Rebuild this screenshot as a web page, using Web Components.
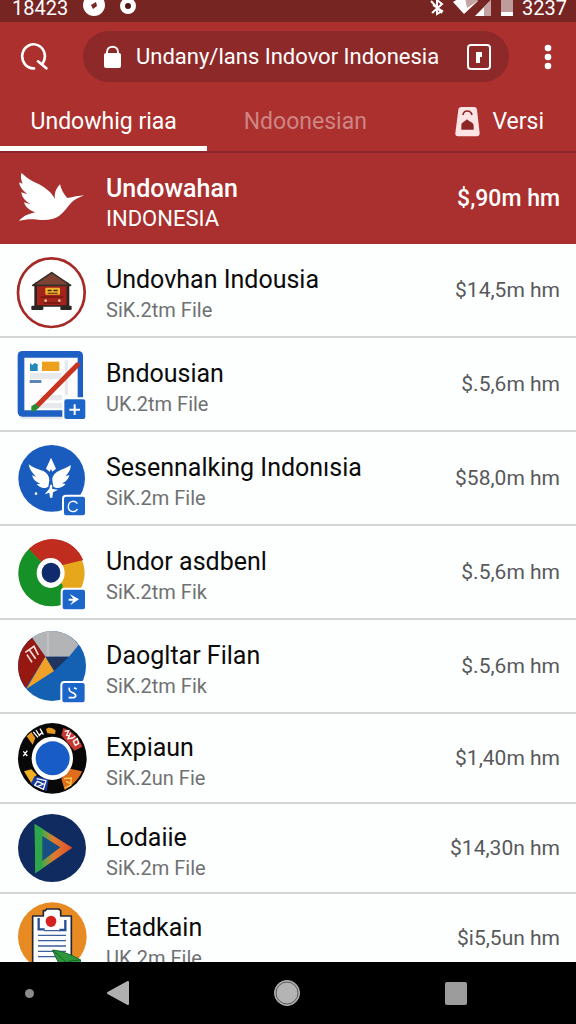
<!DOCTYPE html>
<html lang="id">
<head>
<meta charset="utf-8">
<meta name="viewport" content="width=device-width, initial-scale=1">
<title>Undowahan Indonesia</title>
<style>
  body {
    margin: 0;
    font-family: Roboto, "Liberation Sans", sans-serif;
    background: #fdfefe;
  }
</style>
</head>
<body>
<phone-screen>
  <status-bar slot="top"></status-bar>
  <app-toolbar slot="top"></app-toolbar>
  <tab-strip slot="top"></tab-strip>

  <file-row featured>
    <svg slot="icon" viewBox="48 36 216 216">
      <path fill="#fff" d="M64 66C72 72 84 84 104 94C132 106 156 124 165 145C162 128 168 112 180 100C184 116 190 128 202 141C220 138 236 134 253 133C238 139 226 144 215 154C204 166 192 184 178 194C162 206 138 209 114 206C92 203 74 205 57 210C66 198 80 190 106 184C88 178 76 168 72 154L92 160C76 150 66 140 64 124L82 130C66 116 58 106 58 94L68 98C62 86 62 76 64 66Z"/>
    </svg>
    <span slot="title">Undowahan</span>
    <span slot="detail">INDONESIA</span>
    <span slot="price">$,90m hm</span>
  </file-row>

  <file-row>
    <svg slot="icon" viewBox="48 312 216 216">
      <ellipse cx="154" cy="428" rx="100" ry="103" fill="#fff" stroke="#a52a27" stroke-width="8"/>
      <path fill="#a4231a" stroke="#2c2621" stroke-width="5" d="M108 400H202V468H108Z"/>
      <path fill="#7d4233" stroke="#35302a" stroke-width="5" stroke-linejoin="round" d="M98 406L155 368L212 406Z"/>
      <path stroke="#2c2621" stroke-width="6" d="M106 404V470M205 404V470"/>
      <rect x="136" y="413" width="44" height="21" rx="3" fill="#f3b52d"/>
      <path fill="#4b2a16" d="M143 419H155V424H143ZM160 419H173V424H160ZM143 428H173V431H143Z"/>
      <path stroke="#721811" stroke-width="4" d="M122 441H190M132 459H180"/>
      <circle cx="137" cy="452" r="4" fill="#f2c9a3"/>
      <circle cx="178" cy="452" r="4" fill="#f2c9a3"/>
      <rect x="94" y="467" width="36" height="13" rx="3" fill="#2b2723"/>
      <rect x="181" y="467" width="34" height="13" rx="3" fill="#2b2723"/>
    </svg>
    <span slot="title">Undovhan Indousia</span>
    <span slot="detail">SiK.2tm File</span>
    <span slot="price">$14,5m hm</span>
  </file-row>

  <file-row>
    <svg slot="icon" viewBox="48 39 216 216">
      <rect x="56" y="56" width="190" height="197" rx="14" fill="#e4e8ee"/>
      <rect x="53" y="48" width="196" height="197" rx="14" fill="#1d5fc2"/>
      <path fill="#fdfdfd" d="M73 68H233V226H73Z"/>
      <path fill="#e8e9ec" d="M90 114H184V132H90ZM122 180H186V196H122ZM118 204H190V220H118ZM194 76H204V180H194Z"/>
      <path fill="#2289b8" d="M90 84L97 90L104 84L113 88V108H90Z"/>
      <rect x="126" y="80" width="52" height="28" fill="#eda01e"/>
      <rect x="89" y="135" width="35" height="9" fill="#5b84bd"/>
      <path stroke="#c83420" stroke-width="15" stroke-linecap="round" d="M110 214L232 90"/>
      <path fill="#278c34" d="M94 214L106 206L118 216L106 228L94 230Z"/>
      <rect x="190" y="190" width="69" height="65" rx="9" fill="#1d66c9" stroke="#fff" stroke-width="6"/>
      <path stroke="#fff" stroke-width="6" d="M224 208V240M208 224H240"/>
    </svg>
    <span slot="title">Bndousian</span>
    <span slot="detail">UK.2tm File</span>
    <span slot="price">$.5,6m hm</span>
  </file-row>

  <file-row>
    <svg slot="icon" viewBox="48 321 216 216">
      <circle cx="155" cy="430" r="100" fill="#195cbd"/>
      <g fill="#fff">
        <path d="M86 388C98 398 116 404 130 408C142 414 148 424 148 436L145 455C134 463 120 459 110 448L121 446C108 442 99 434 96 421L108 425C95 412 88 402 86 388Z"/>
        <path d="M212 390C202 398 188 402 176 408C164 414 156 424 157 436L160 455C172 463 186 458 197 447L186 445C198 440 206 432 208 420L196 424C207 413 213 402 212 390Z"/>
        <path d="M153 368L168 401L157 410L153 402L149 410L138 401Z"/>
        <path d="M151 449H156L157 462L174 464L159 472L157 488H150L148 473L134 478L148 461Z"/>
        <circle cx="108" cy="476" r="4"/>
      </g>
      <rect x="189" y="482" width="69" height="62" rx="9" fill="#1d66c9" stroke="#fff" stroke-width="6"/>
      <path fill="none" stroke="#fff" stroke-width="4" d="M232 506C229 500 223 498 217 499C209 501 205 507 205 515C205 523 210 529 218 530C224 530 230 528 232 522"/>
    </svg>
    <span slot="title">Sesennalking Indonısia</span>
    <span slot="detail">SiK.2m File</span>
    <span slot="price">$58,0m hm</span>
  </file-row>

  <file-row>
    <svg slot="icon" viewBox="48 33 216 216">
      <circle cx="155" cy="144" r="99" fill="#e7a71c"/>
      <path fill="#c02c1d" d="M155 144V122L249 105A99 99 0 0 0 87 72Z"/>
      <path fill="#c02c1d" d="M155 144L87 72A99 99 0 0 1 249 105L180 122Z"/>
      <path fill="#159128" d="M155 144L87 72A99 99 0 0 0 185 239L188 180Z"/>
      <ellipse cx="152" cy="144" rx="42" ry="45" fill="#fff"/>
      <ellipse cx="153" cy="143" rx="28" ry="30" fill="#102b6c"/>
      <rect x="185" y="191" width="73" height="65" rx="9" fill="#1d66c9" stroke="#fff" stroke-width="6"/>
      <path fill="#fff" d="M206 221H220L209 207L237 223L210 241L219 227H206Z"/>
    </svg>
    <span slot="title">Undor asdbenl</span>
    <span slot="detail">SiK.2tm Fik</span>
    <span slot="price">$.5,6m hm</span>
  </file-row>

  <file-row>
    <svg slot="icon" viewBox="48 315 216 216">
      <ellipse cx="156" cy="423" rx="102" ry="105" fill="#1460b2"/>
      <path fill="#b3b4b6" d="M96 338A102 105 0 0 1 236 359L207 395H136Z"/>
      <path fill="#1d355f" d="M136 395H207L162 438Z"/>
      <path fill="#971711" d="M96 338L136 395L77 489A102 105 0 0 1 96 338Z"/>
      <path fill="#efa12a" d="M136 395L162 438L79 492Z"/>
      <path stroke="#d0d1d2" stroke-width="3" d="M144 319V394"/>
      <path fill="none" stroke="#f4dfdb" stroke-width="5" d="M76 382L102 364L115 390M81 389L96 412M89 376L107 401"/>
      <rect x="184" y="471" width="73" height="64" rx="9" fill="#1d66c9" stroke="#fff" stroke-width="6"/>
      <path fill="none" stroke="#fff" stroke-width="5" d="M208 488C205 500 214 501 222 505C232 512 226 519 216 518H206M222 488L230 492"/>
    </svg>
    <span slot="title">Daogltar Filan</span>
    <span slot="detail">SiK.2tm Fik</span>
    <span slot="price">$.5,6m hm</span>
  </file-row>

  <file-row compact>
    <svg slot="icon" viewBox="48 36 216 216">
      <ellipse cx="157" cy="145" rx="103" ry="106" fill="#090808"/>
      <path fill="#e8991f" d="M80 79L94 66L106 84L98 104ZM138 58C142 50 160 52 167 62L165 72L142 70Z"/>
      <path fill="#c83832" d="M190 54C216 62 236 84 247 110L223 122L184 76Z"/>
      <path fill="#f0b022" d="M72 184L94 178L110 194L94 220Z"/>
      <path fill="#173a9b" d="M104 198L146 206L140 244L92 222Z"/>
      <path fill="#e06d1c" d="M210 176L246 184C236 208 218 226 194 240L184 206Z"/>
      <path fill="none" stroke="#fff" stroke-width="4" d="M100 66L114 82M108 60L118 76L128 66M120 56L130 74M194 64L206 62L200 76L210 78M212 68L204 86L218 84L226 78M220 94L232 86L236 100L226 106ZM70 124L82 138M82 122L70 138M110 206L138 212L130 238L104 226L112 214L130 222L112 230"/>
      <path fill="none" stroke="#f8cd51" stroke-width="4" d="M192 206L214 204L212 226L194 234M198 214L210 220"/>
      <ellipse cx="157" cy="145" rx="62" ry="65" fill="#fff"/>
      <ellipse cx="158" cy="145" rx="51" ry="51" fill="#185dc7"/>
    </svg>
    <span slot="title">Expiaun</span>
    <span slot="detail">SiK.2un Fie</span>
    <span slot="price">$1,40m hm</span>
  </file-row>

  <file-row compact>
    <svg slot="icon" viewBox="48 306 216 216">
      <defs>
        <linearGradient id="play" x1="0" x2="1" y1="0" y2="0">
          <stop offset="0" stop-color="#2da54c"/>
          <stop offset=".25" stop-color="#55a647"/>
          <stop offset=".5" stop-color="#df7b2e"/>
          <stop offset="1" stop-color="#e24f2b"/>
        </linearGradient>
      </defs>
      <circle cx="156" cy="414" r="102" fill="#102b60"/>
      <path fill="url(#play)" d="M104 342L217 413L106 490Z"/>
      <path fill="#30a64b" d="M104 342L127 356V474L106 490Z"/>
      <path fill="#174f83" d="M127 378L181 412L127 453Z"/>
    </svg>
    <span slot="title">Lodaiie</span>
    <span slot="detail">SiK.2m File</span>
    <span slot="price">$14,30n hm</span>
  </file-row>

  <file-row compact>
    <svg slot="icon" viewBox="48 66 216 216">
      <circle cx="157" cy="170" r="103" fill="#e78a22"/>
      <path fill="#fff" stroke="#20283c" stroke-width="5" stroke-linejoin="round" d="M98 108H130V92H136L140 87H176L182 92V108H214V274H98Z"/>
      <path fill="none" stroke="#284f94" stroke-width="7" d="M116 114V148H134M196 120V150H178"/>
      <path fill="none" stroke="#3b5f9d" stroke-width="4" d="M132 152H182M114 166H198M114 182H198M114 198H198M114 214H198M114 230H170"/>
      <ellipse cx="153" cy="124" rx="16" ry="17" fill="#d3211d"/>
      <path fill="#2d963a" stroke="#17672a" stroke-width="3" d="M158 210C190 214 218 226 242 240L236 272H186C178 248 166 232 158 210Z"/>
      <path stroke="#17672a" stroke-width="3" d="M160 212L216 262M242 240L204 244"/>
    </svg>
    <span slot="title">Etadkain</span>
    <span slot="detail">UK.2m File</span>
    <span slot="price">$i5,5un hm</span>
  </file-row>

  <system-nav slot="bottom"></system-nav>
</phone-screen>

<script>
function attachTemplate(host, html) {
  const template = document.createElement('template');
  template.innerHTML = html;
  host.attachShadow({ mode: 'open' }).appendChild(template.content.cloneNode(true));
}

class PhoneScreen extends HTMLElement {
  constructor() {
    super();
    attachTemplate(this, `
      <style>
        :host {
          display: flex;
          flex-direction: column;
          height: 100vh;
        }

        header {
          flex: none;
          background: #ab302e;
          color: #fff;
        }

        main {
          flex: 1;
          min-height: 0;
          overflow: hidden;
        }
      </style>
      <header><slot name="top"></slot></header>
      <main><slot></slot></main>
      <slot name="bottom"></slot>
    `);
  }
}

class StatusBar extends HTMLElement {
  constructor() {
    super();
    attachTemplate(this, `
      <style>
        :host {
          display: flex;
          justify-content: space-between;
          align-items: flex-end;
          box-sizing: border-box;
          height: 22px;
          padding: 0 9px 2px 12px;
          overflow: hidden;
          background: #762523;
          font-size: 20px;
          line-height: 20px;
        }

        div {
          display: flex;
          align-items: center;
          gap: 12px;
        }

        .right {
          gap: 8px;
        }

        svg {
          display: block;
          height: 24px;
        }
      </style>
      <div>
        <span>18423</span>
        <svg width="60" viewBox="80 -4 60 24" aria-hidden="true">
          <circle cx="94" cy="5" r="11" fill="#fff"/>
          <path fill="#762523" d="M91 5L96 2L97 6L93 9Z"/>
          <circle cx="128" cy="6" r="8" fill="#fff"/>
          <circle cx="128" cy="6" r="3" fill="#4f1919"/>
        </svg>
      </div>
      <div class="right">
        <svg width="84" viewBox="433 -4 84 24" aria-hidden="true">
          <path fill="none" stroke="#fff" stroke-width="2" d="M434 1L445 13M435 13L445 4L440 0V14L445 11L436 5"/>
          <path fill="#fff" d="M456 2C462 -3 476 -3 481 1L467 14Z"/>
          <path fill="#c4a3a2" d="M468 -2L476 -2L481 1L470 8Z"/>
          <path fill="#fff" d="M478 16L494 0V16Z"/>
          <path fill="#c4a3a2" d="M487 7L494 0V16H487Z"/>
          <path fill="#bd9c9b" d="M504 -4H516V12H504Z"/>
          <path fill="#fff" d="M504 12H516V16H504Z"/>
        </svg>
        <span>3237</span>
      </div>
    `);
  }
}

class AppToolbar extends HTMLElement {
  constructor() {
    super();
    attachTemplate(this, `
      <style>
        :host {
          display: flex;
          align-items: center;
          padding: 9px 0 0;
        }

        button {
          display: grid;
          place-items: center;
          padding: 0;
          border: 0;
          background: none;
        }

        svg {
          display: block;
        }

        .search {
          width: 83px;
          height: 48px;
          padding-right: 14px;
        }

        .more {
          width: 67px;
          height: 48px;
          padding-left: 10px;
        }

        /* Address pill */
        label {
          flex: 1;
          min-width: 0;
          height: 51px;
          display: flex;
          align-items: center;
          gap: 14px;
          box-sizing: border-box;
          padding: 0 17px 0 20px;
          border-radius: 26px;
          background: #8e2929;
        }

        input {
          flex: 1;
          min-width: 0;
          padding: 0;
          border: 0;
          outline: 0;
          background: none;
          color: #fff;
          font: 22px/32px Roboto, "Liberation Sans", sans-serif;
        }
      </style>
      <button class="search" aria-label="Search">
        <svg width="30" height="30" viewBox="60 120 90 90">
          <path fill="none" stroke="#fff" stroke-width="8" stroke-linecap="round" d="M102 199A34 36 0 1 1 126 187M114 178L139 199"/>
        </svg>
      </button>
      <label>
        <svg width="19" height="24" viewBox="0 0 19 24" aria-hidden="true">
          <path fill="none" stroke="#fff" stroke-width="2" d="M4 9V7C4 0 15 0 15 7V9"/>
          <rect x="1" y="8" width="17" height="15" rx="2" fill="#fff"/>
        </svg>
        <input type="text" aria-label="Address" value="Undany/lans Indovor Indonesia">
        <svg width="26" height="28" viewBox="0 0 26 28" aria-hidden="true">
          <rect x="2" y="2" width="22" height="24" rx="3" fill="none" stroke="#fff" stroke-width="2"/>
          <path fill="#fff" d="M10 9H16V14H14V20H10Z"/>
        </svg>
      </label>
      <button class="more" aria-label="More">
        <svg width="8" height="26" viewBox="0 0 8 26" fill="#fff">
          <circle cx="4" cy="4" r="3.3"/>
          <circle cx="4" cy="13" r="3.3"/>
          <circle cx="4" cy="22" r="3.3"/>
        </svg>
      </button>
    `);
  }
}

class TabStrip extends HTMLElement {
  constructor() {
    super();
    attachTemplate(this, `
      <style>
        :host {
          display: block;
          padding-top: 16px;
          border-bottom: 2px solid #8b2728;
        }

        div {
          display: grid;
          grid-template-columns: 36fr 34fr 30fr;
        }

        button {
          display: flex;
          align-items: center;
          justify-content: center;
          gap: 12px;
          height: 53px;
          padding: 0;
          border: 0;
          border-bottom: 5px solid transparent;
          background: none;
          color: #fff;
          font: 23px/28px Roboto, "Liberation Sans", sans-serif;
        }

        button[aria-selected="true"] {
          border-color: #fff;
        }

        .dim {
          color: #cf8583;
        }

        .end {
          justify-content: flex-end;
          padding-right: 32px;
        }
      </style>
      <div role="tablist">
        <button role="tab" aria-selected="true">Undowhig riaa</button>
        <button role="tab" aria-selected="false" class="dim">Ndoonesian</button>
        <button role="tab" aria-selected="false" class="end">
          <svg width="25" height="30" viewBox="515 320 75 90" aria-hidden="true">
            <path fill="#fde3e3" d="M534 320H572Q580 320 581 328L589 398Q589 408 580 408H524Q515 408 516 398L525 328Q526 320 534 320Z"/>
            <path fill="#8c2727" d="M534 388V376C534 366 542 366 551 357C560 366 571 366 571 376V388Z"/>
            <path fill="none" stroke="#8c2727" stroke-width="5" d="M539 344C541 328 562 328 566 344"/>
          </svg>
          Versi
        </button>
      </div>
    `);
  }
}

/*
One entry of the list.
Attributes: featured (red banner row), compact (shorter row)
Slots: icon, title, detail, price
*/
class FileRow extends HTMLElement {
  constructor() {
    super();
    attachTemplate(this, `
      <style>
        :host {
          display: block;
          box-sizing: border-box;
          height: 94px;
          border-bottom: 2px solid #d3d4d5;
          color: #0b0b0b;
          --detail: #707172;
          --price: #58595a;
        }

        :host([compact]) {
          height: 90px;
        }

        :host([featured]) {
          height: 91px;
          border: 0;
          background: #a9302e;
          color: #fff;
          --detail: #fff;
          --price: #fff;
          --price-size: 23px;
          --weight: 500;
        }

        a {
          display: flex;
          align-items: center;
          gap: 18px;
          height: 100%;
          padding: 0 16px;
          color: inherit;
          text-decoration: none;
        }

        ::slotted(svg) {
          display: block;
          flex: none;
          width: 72px;
          height: 72px;
          overflow: visible;
        }

        .text {
          flex: 1;
          min-width: 0;
          padding-top: 8px;
          white-space: nowrap;
        }

        .title {
          font-size: 25px;
          line-height: 32px;
          font-weight: var(--weight, 400);
        }

        .detail {
          font-size: 20px;
          line-height: 28px;
          color: var(--detail);
        }

        :host([featured]) .detail {
          font-size: 22px;
        }

        .price {
          font-size: var(--price-size, 21px);
          line-height: 28px;
          font-weight: var(--weight, 400);
          color: var(--price);
        }
      </style>
      <a href="#">
        <slot name="icon"></slot>
        <div class="text">
          <div class="title"><slot name="title"></slot></div>
          <div class="detail"><slot name="detail"></slot></div>
        </div>
        <div class="price"><slot name="price"></slot></div>
      </a>
    `);
  }
}

class SystemNav extends HTMLElement {
  constructor() {
    super();
    attachTemplate(this, `
      <style>
        :host {
          flex: none;
          display: grid;
          grid-template-columns: 34px repeat(3, 1fr) 36px;
          align-items: center;
          position: relative;
          height: 62px;
          background: #000;
        }

        .dot {
          justify-self: end;
          width: 9px;
          height: 9px;
          border-radius: 50%;
          background: #8b8b8b;
        }

        button {
          display: grid;
          place-items: center;
          height: 48px;
          padding: 0;
          border: 0;
          background: none;
        }
      </style>
      <span class="dot"></span>
      <button aria-label="Back">
        <svg width="28" height="28" viewBox="0 0 28 28"><path fill="#b0b0b0" stroke="#b0b0b0" stroke-width="2" stroke-linejoin="round" d="M4 14L24 3V25Z"/></svg>
      </button>
      <button aria-label="Home">
        <svg width="28" height="28" viewBox="0 0 28 28"><circle cx="14" cy="14" r="12.5" fill="#b4b4b4" stroke="#b4b4b4"/><circle cx="14" cy="14" r="11" fill="none" stroke="#555"/></svg>
      </button>
      <button aria-label="Recent apps">
        <svg width="28" height="28" viewBox="0 0 28 28"><rect x="3" y="3" width="22" height="23" rx="2" fill="#9d9c9d"/></svg>
      </button>
    `);
  }
}

customElements.define('phone-screen', PhoneScreen);
customElements.define('status-bar', StatusBar);
customElements.define('app-toolbar', AppToolbar);
customElements.define('tab-strip', TabStrip);
customElements.define('file-row', FileRow);
customElements.define('system-nav', SystemNav);
</script>
</body>
</html>
